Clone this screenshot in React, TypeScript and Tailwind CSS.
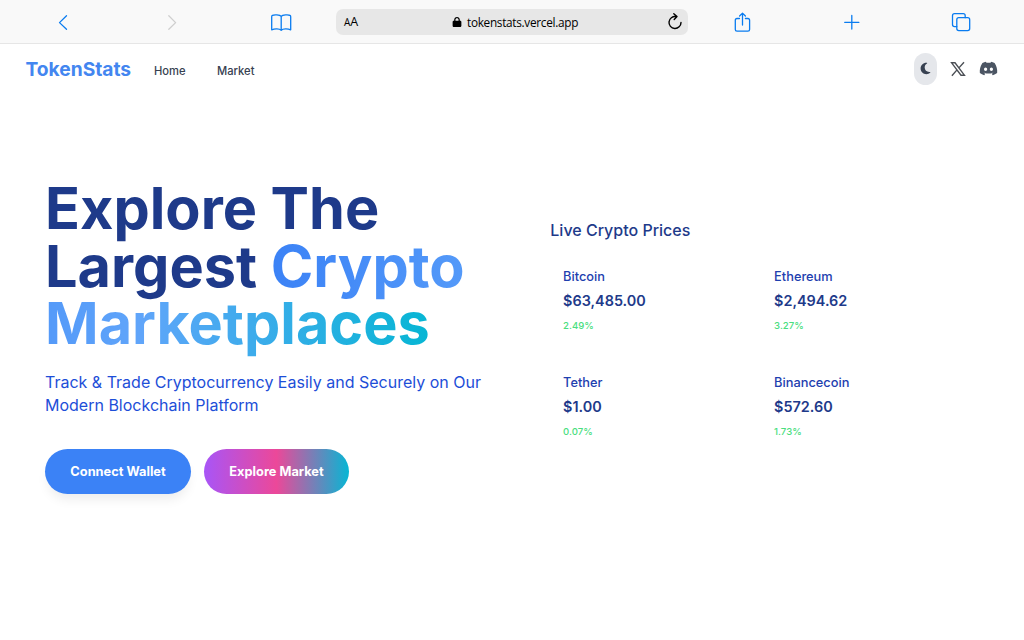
import type { ReactNode } from "react";
import { FaDiscord, FaLock, FaMoon } from "react-icons/fa6";

type Coin = { name: string; price: string; change: string };

const coins: Coin[] = [
  { name: "Bitcoin", price: "$63,485.00", change: "2.49%" },
  { name: "Ethereum", price: "$2,494.62", change: "3.27%" },
  { name: "Tether", price: "$1.00", change: "0.07%" },
  { name: "Binancecoin", price: "$572.60", change: "1.73%" },
];

function Glyph({ children, className = "" }: { children: ReactNode; className?: string }) {
  return (
    <svg
      viewBox="0 0 24 24"
      fill="none"
      stroke="currentColor"
      strokeWidth="1.3"
      strokeLinecap="round"
      strokeLinejoin="round"
      className={`size-6 shrink-0 ${className}`}
    >
      {children}
    </svg>
  );
}

function BrowserBar() {
  return (
    <div className="flex h-11 items-center border-b border-[#e6e6e6] bg-[#f9f9f9] text-[#0a7cf0]">
      <Glyph className="ml-[51px]">
        <path d="M15.5 5.8 L8.5 12.6 L15.5 19.3" />
      </Glyph>
      <Glyph className="ml-[85px] text-[#cfcfcf]">
        <path d="M8.8 5.8 L15.6 12.6 L8.8 19.3" />
      </Glyph>
      <Glyph className="ml-[85px]">
        <path d="M12.2 6.4 C11 4.6 4.8 4.4 3.4 5.4 Q2.7 5.8 2.7 6.8 V19.8 C5.6 18.6 10.4 18.6 12.2 20.2 C14 18.6 18.8 18.6 21.7 19.8 V6.8 Q21.7 5.8 21 5.4 C19.6 4.4 13.4 4.6 12.2 6.4 Z M12.2 6.4 V20" />
      </Glyph>
      <div className="ml-[43px] flex h-[26px] w-[352px] items-center rounded-[7px] bg-[#e7e7e7] font-['Open_Sans','Noto_Sans',sans-serif] text-black">
        <div className="ml-2 mt-[2px] w-[108px] text-[12.5px] leading-none">
          <span className="text-[10px]">A</span>A
        </div>
        <FaLock className="size-[10px]" />
        <span className="ml-[5px] mt-[2px] w-[196px] text-[11.8px] leading-none tracking-[-0.3px]">
          tokenstats.vercel.app
        </span>
        <svg viewBox="0 0 20 20" fill="none" stroke="currentColor" strokeWidth="1.4" strokeLinecap="round" strokeLinejoin="round" className="ml-[2px] size-5">
          <path d="M11 4.6 A6 6 0 1 0 16 10.5 M8.8 1.8 L12 4.6 L9.2 7.6" />
        </svg>
      </div>
      <Glyph className="ml-[42px]">
        <path d="M9.5 8.5 H7 Q5.3 8.5 5.3 10.2 V19.4 Q5.3 21.1 7 21.1 H17.9 Q19.6 21.1 19.6 19.4 V10.2 Q19.6 8.5 17.9 8.5 H15.4 M12.5 15 V3.2 M9.6 6 L12.5 3.1 L15.4 6" />
      </Glyph>
      <Glyph className="ml-[85px]">
        <path d="M12.8 5.5 V19 M5.7 12.3 H19.9" />
      </Glyph>
      <Glyph className="ml-[85px]">
        <path d="M8.8 16.6 H6.5 Q4.5 16.6 4.5 14.6 V5.7 Q4.5 3.7 6.5 3.7 H15.2 Q17.2 3.7 17.2 5.7 V7.7" />
        <rect x="8.8" y="7.7" width="12.9" height="12.9" rx="2" />
      </Glyph>
    </div>
  );
}

function XLogo() {
  return (
    <svg viewBox="0 0 16 16" fill="none" stroke="currentColor" strokeWidth="1.4" className="ml-[13px] size-4 text-[#4b4f55]">
      <path d="M1.6 1.8 H5 L14.4 14.2 H11 Z M14 1.2 L8.9 6.9 M7 8.9 L1.9 14.8" />
    </svg>
  );
}

function NavBar() {
  return (
    <nav className="flex h-[51px] items-center pl-[25.5px] pr-[26px] text-[#374151]">
      <span className="w-[128.5px] text-[19.2px] font-bold text-[#4386f0]">TokenStats</span>
      <a className="mt-[3px] w-[63px] text-[11.2px] font-medium">Home</a>
      <a className="mt-[3px] text-[11.2px] font-medium">Market</a>
      <div className="mb-[2px] ml-auto flex items-center">
        <button className="flex h-8 w-[23px] items-center justify-center rounded-full bg-[#e5e7eb]">
          <FaMoon className="size-[13px]" />
        </button>
        <XLogo />
        <FaDiscord className="ml-[13px] size-[19px] text-[#4b5563]" />
      </div>
    </nav>
  );
}

export default function App() {
  return (
    <div className="h-[640px] w-[1024px] overflow-hidden bg-white font-[Inter,sans-serif]">
      <BrowserBar />
      <NavBar />
      <main className="flex">
        <section className="w-[550.3px] shrink-0 pl-[45px] pt-[85px]">
          <h1 className="w-[460px] text-[57.6px] leading-[57.6px] font-bold text-[#1e3a8a]">
            Explore The
            <br />
            Largest{" "}
            <span className="bg-[linear-gradient(to_right,#3b82f6,#60a5fa,#06b6d4)] bg-clip-text text-transparent">
              Crypto
              <br />
              Marketplaces
            </span>
          </h1>
          <p className="mt-[18px] w-[450px] text-[16px] leading-[23px] text-[#1d4ed8]">
            Track &amp; Trade Cryptocurrency Easily and Securely on Our
            <br />
            Modern Blockchain Platform
          </p>
          <div className="mt-8 flex gap-[13px] text-[12.8px] font-bold text-white">
            <button className="h-[45px] w-[146px] rounded-full bg-[#3b82f6] shadow-[0_8px_12px_-3px_rgb(0_0_0/0.08)]">
              Connect Wallet
            </button>
            <button className="h-[45px] w-[145px] rounded-full bg-[linear-gradient(to_right,#a855f7,#ec4899,#06b6d4)]">
              Explore Market
            </button>
          </div>
        </section>
        <section className="pt-[124px]">
          <h2 className="text-[16px] leading-[22px] font-medium text-[#1e3a8a]">Live Crypto Prices</h2>
          <div className="mt-[27px] grid grid-cols-[211px_211px] gap-y-[36px] pl-[12.8px]">
            {coins.map((coin) => (
              <div key={coin.name} className="h-[70px]">
                <div className="text-[12.8px] leading-[18px] font-medium text-[#1e40af]">{coin.name}</div>
                <div className="mt-[5px] text-[14.4px] leading-[20px] font-semibold text-[#1e3a8a]">{coin.price}</div>
                <div className="mt-[8px] text-[9.6px] leading-[13px] font-medium text-[#4ade80]">{coin.change}</div>
              </div>
            ))}
          </div>
        </section>
      </main>
    </div>
  );
}
